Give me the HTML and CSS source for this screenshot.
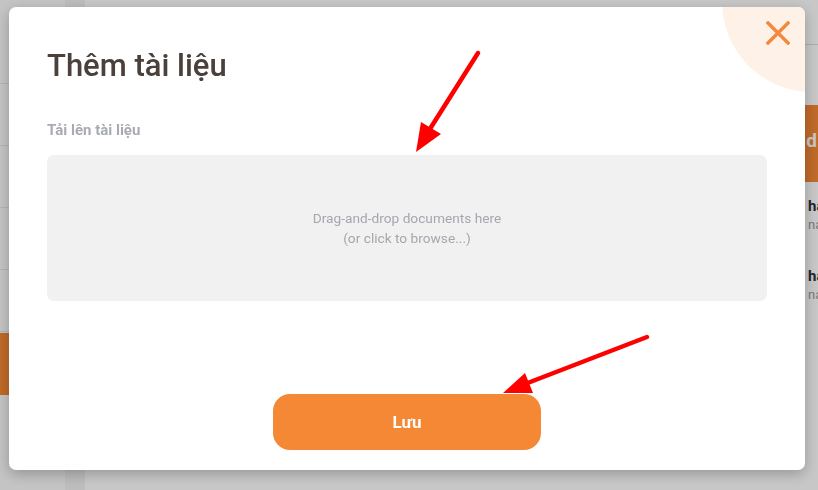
FILE: index.html
```html
<!DOCTYPE html>
<html lang="vi">
<head>
  <meta charset="UTF-8" />
  <meta name="viewport" content="width=device-width, initial-scale=1.0" />
  <title>Thêm tài liệu</title>
  <link rel="stylesheet" href="styles.css">
</head>
<body>

  <!-- Trang phía sau -->
  <div class="page">
    <aside class="sidebar">
      <div class="nav-item"></div>
      <div class="nav-item"></div>
      <div class="nav-item"></div>
      <div class="nav-item"></div>
      <div class="nav-item"></div>
      <div class="nav-item active"></div>
    </aside>
    <div class="gutter"></div>
    <main class="content"></main>
    <section class="side-panel">
      <div class="panel-head"></div>
      <div class="panel-gap"></div>
      <div class="panel-tab">dd</div>
      <div class="panel-row">
        <b>hanh</b>
        <span>nanh</span>
      </div>
      <div class="panel-row">
        <b>hanh</b>
        <span>nanh</span>
      </div>
    </section>
  </div>

  <!-- Modal thêm tài liệu -->
  <div class="overlay">
    <div class="modal">
      <span class="modal-deco"></span>
      <button class="modal-close" aria-label="Đóng">
        <svg width="24" height="24" viewBox="0 0 24 24">
          <path d="M2 2 L22 22 M22 2 L2 22" stroke="#f5883a" stroke-width="3.4" stroke-linecap="square" fill="none"/>
        </svg>
      </button>

      <h2 class="modal-title">Thêm tài liệu</h2>
      <label class="field-label">Tải lên tài liệu</label>
      <div class="dropzone">
        <p>Drag-and-drop documents here<br>(or click to browse...)</p>
      </div>

      <div class="modal-actions">
        <button class="btn-save">Lưu</button>
      </div>
    </div>

    <!-- mũi tên chú thích -->
    <svg class="annotations" width="818" height="490" viewBox="0 0 818 490">
      <line x1="478" y1="53" x2="428" y2="132" stroke="#ff0000" stroke-width="4.5" stroke-linecap="round"/>
      <polygon points="416,152 421,122 441,134" fill="#ff0000"/>
      <line x1="647" y1="337" x2="525" y2="384" stroke="#ff0000" stroke-width="4.5" stroke-linecap="round"/>
      <polygon points="503,393 525,373 533,393" fill="#ff0000"/>
    </svg>
  </div>

</body>
</html>
```

FILE: styles.css
```css
* {
  box-sizing: border-box;
}

body {
  margin: 0;
  font-family: Roboto, "Liberation Sans", sans-serif;
  background-color: #ffffff;
  overflow: hidden;
}

/* trang phía sau */
.page {
  display: flex;
  width: 818px;
  height: 490px;
}

.sidebar {
  width: 65px;
  padding-top: 22px;
  background-color: #fbfbfb;
}

.nav-item {
  height: 62px;
  border-bottom: 1px solid #e6e6e6;
}

.nav-item.active {
  margin-top: 1px;
  background-color: #f58834;
  border-bottom: none;
}

.gutter {
  width: 20px;
  background-color: #f2f2f2;
}

.content {
  flex: 1;
  background-color: #ffffff;
}

.side-panel {
  width: 13px;
  overflow: hidden;
  white-space: nowrap;
  background-color: #ffffff;
}

.panel-head {
  height: 45px;
  border-bottom: 1px solid #dcdcdc;
}

.panel-gap {
  height: 60px;
}

.panel-tab {
  height: 77px;
  padding: 24px 0 0 2px;
  background-color: #f58834;
  color: #ffffff;
  font-size: 19px;
  font-weight: bold;
  letter-spacing: 1px;
  direction: rtl;
}

.panel-row {
  height: 70px;
  padding: 14px 0 0 3px;
}

.panel-row b {
  display: block;
  font-size: 15px;
  color: #2d2d3a;
  line-height: 20px;
}

.panel-row span {
  display: block;
  font-size: 13px;
  color: #9a9a9a;
  line-height: 18px;
}

/* overlay + modal */
.overlay {
  position: fixed;
  top: 0;
  left: 0;
  width: 100%;
  height: 100%;
  padding: 7px 13px 20px 9px;
  display: flex;
  background-color: rgba(0, 0, 0, 0.22);
}

.modal {
  flex: 1;
  position: relative;
  overflow: hidden;
  display: flex;
  flex-direction: column;
  padding: 40px 38px 20px;
  background-color: #ffffff;
  border-radius: 7px;
  box-shadow: 0 4px 14px rgba(0, 0, 0, 0.25);
}

.modal-deco {
  position: absolute;
  top: -95px;
  right: -97px;
  width: 180px;
  height: 180px;
  border-radius: 50%;
  background-color: #fef2e8;
}

.modal-close {
  position: absolute;
  top: 14px;
  right: 15px;
  padding: 0;
  border: none;
  background: none;
  cursor: pointer;
  line-height: 0;
}

.modal-title {
  margin: 0;
  font-size: 31px;
  font-weight: 500;
  line-height: 38px;
  color: #4a403c;
}

.field-label {
  margin-top: 37px;
  font-size: 15px;
  font-weight: bold;
  line-height: 17px;
  color: #a9abb2;
}

.dropzone {
  height: 146px;
  margin-top: 16px;
  display: flex;
  align-items: center;
  justify-content: center;
  background-color: #f1f1f1;
  border-radius: 7px;
  cursor: pointer;
}

.dropzone p {
  margin: 0;
  text-align: center;
  font-size: 13.7px;
  line-height: 20px;
  color: #a5a7ae;
}

.modal-actions {
  margin-top: auto;
  display: flex;
  justify-content: center;
}

.btn-save {
  width: 268px;
  height: 56px;
  border: none;
  border-radius: 17px;
  background-color: #f58834;
  color: #ffffff;
  font-family: Roboto, "Liberation Sans", sans-serif;
  font-size: 17px;
  font-weight: bold;
  cursor: pointer;
}

.annotations {
  position: absolute;
  top: 0;
  left: 0;
  pointer-events: none;
}
```
